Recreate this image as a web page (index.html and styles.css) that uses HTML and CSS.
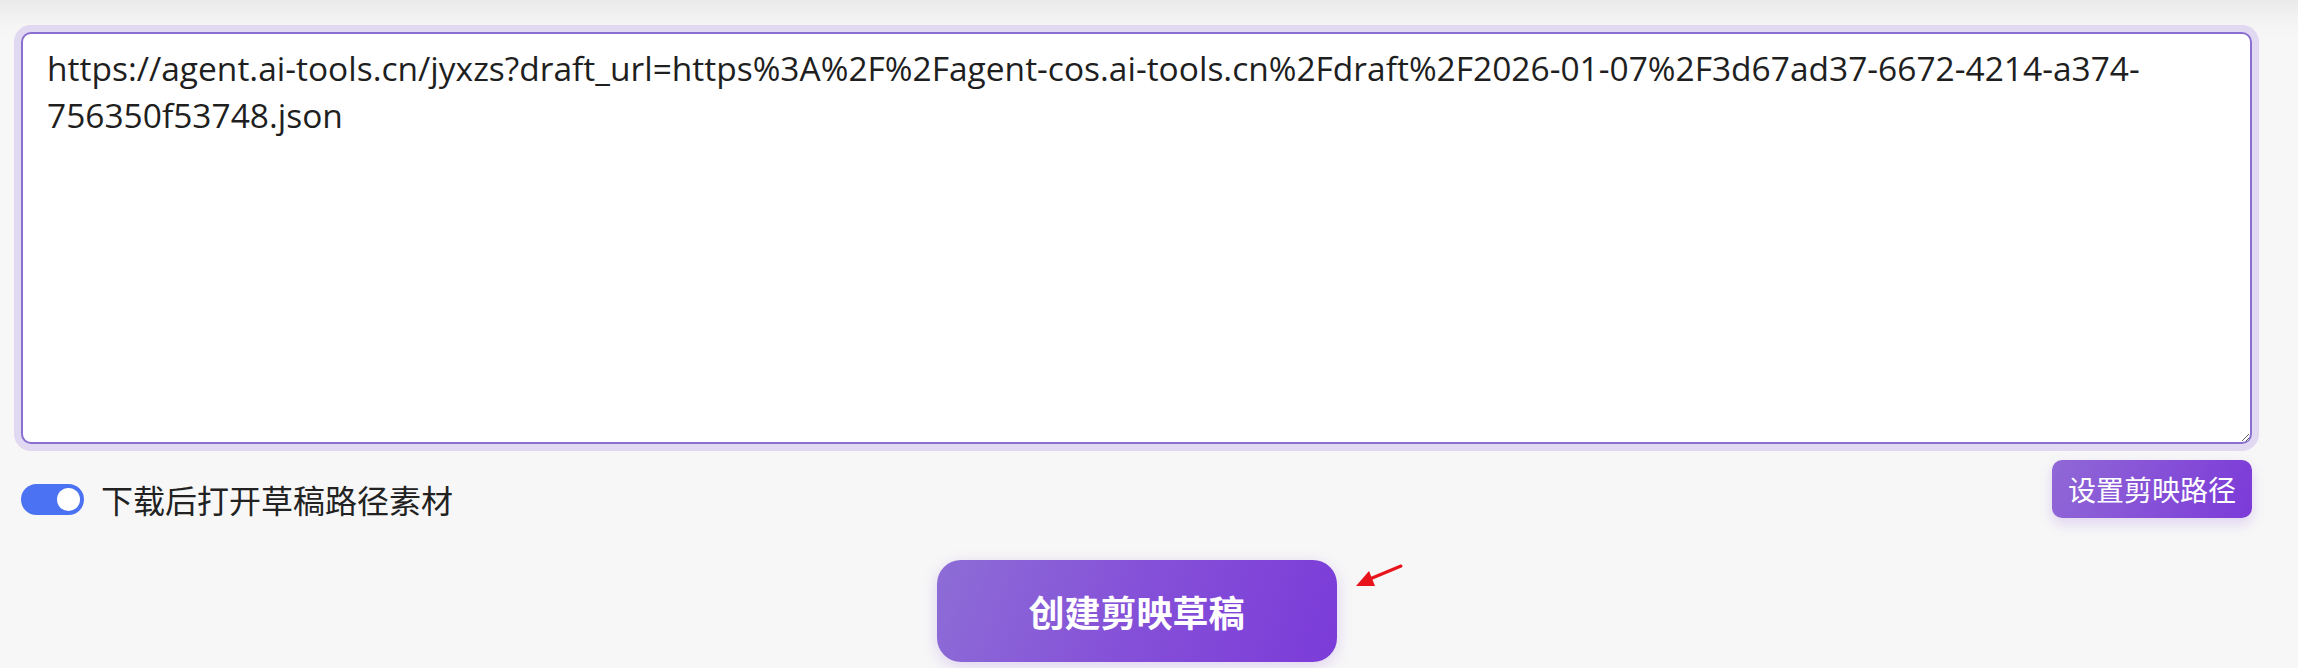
FILE: index.html
```html
<!DOCTYPE html>
<html lang="zh-CN">
<head>
<meta charset="utf-8">
<title>创建剪映草稿</title>
<link rel="stylesheet" href="styles.css">
</head>
<body>
<main class="panel">
  <textarea class="url-input" spellcheck="false">https://agent.ai-tools.cn/jyxzs?draft_url=https%3A%2F%2Fagent-cos.ai-tools.cn%2Fdraft%2F2026-01-07%2F3d67ad37-6672-4214-a374-756350f53748.json</textarea>
  <div class="options-row">
    <label class="switch-label">
      <span class="switch"><span class="knob"></span></span>
      <span class="switch-text">下载后打开草稿路径素材</span>
    </label>
    <button class="path-btn" type="button">设置剪映路径</button>
  </div>
  <div class="action-row">
    <button class="create-btn" type="button">创建剪映草稿</button>
    <svg class="pointer-arrow" width="52" height="26" viewBox="0 0 52 26" aria-hidden="true">
      <line x1="48" y1="2" x2="12" y2="17" stroke="#e8141c" stroke-width="3" stroke-linecap="round"/>
      <polygon points="3,22 16,7 22,22" fill="#e8141c"/>
    </svg>
  </div>
</main>
</body>
</html>
```

FILE: styles.css
```css
html, body {
  margin: 0;
  padding: 0;
}

body {
  background: linear-gradient(#eaeaea 0px, #f4f4f4 22px, #f7f7f7 40px, #f7f7f7 100%);
  font-family: "Open Sans", "Noto Sans CJK SC", sans-serif;
  color: #222;
  height: 668px;
  overflow: hidden;
}

.panel {
  padding: 32px 46px 0 21px;
  display: flex;
  flex-direction: column;
}

.url-input {
  display: block;
  box-sizing: border-box;
  width: 100%;
  height: 412px;
  margin: 0;
  padding: 11px 24px;
  border: 2px solid #8a6fd0;
  border-radius: 10px;
  box-shadow: 0 0 0 7px #e1d8f1;
  background: #fff;
  font-family: "Open Sans", sans-serif;
  font-size: 33.5px;
  line-height: 47px;
  color: #1f1f1f;
  outline: none;
  resize: both;
}

.options-row {
  display: flex;
  justify-content: space-between;
  align-items: flex-start;
  margin-top: 16px;
}

.switch-label {
  display: flex;
  align-items: center;
  gap: 17px;
  margin-top: 23px;
}

.switch {
  box-sizing: border-box;
  width: 63px;
  height: 31px;
  border-radius: 16px;
  background: #4a72f2;
  display: flex;
  align-items: center;
  justify-content: flex-end;
  padding-right: 4px;
}

.knob {
  width: 23px;
  height: 23px;
  border-radius: 50%;
  background: #fff;
}

.switch-text {
  font-family: "Noto Sans CJK SC", sans-serif;
  font-size: 32px;
  line-height: 32px;
  color: #222;
}

.path-btn {
  box-sizing: border-box;
  width: 200px;
  height: 58px;
  padding: 0;
  border: none;
  border-radius: 10px;
  background: linear-gradient(110deg, #9068d6 0%, #7c3ad8 100%);
  box-shadow: 0 6px 14px rgba(124, 58, 216, 0.18);
  color: #fff;
  font-family: "Noto Sans CJK SC", sans-serif;
  font-size: 28px;
  line-height: 58px;
}

.action-row {
  position: relative;
  display: flex;
  justify-content: center;
  margin-top: 42px;
}

.create-btn {
  box-sizing: border-box;
  width: 400px;
  height: 102px;
  border: none;
  border-radius: 24px;
  background: linear-gradient(110deg, #8d6dd6 0%, #8550d8 50%, #7b3bd8 100%);
  box-shadow: 0 4px 16px rgba(124, 58, 216, 0.2);
  color: #fff;
  font-family: "Noto Sans CJK SC", sans-serif;
  font-weight: 700;
  font-size: 36px;
  line-height: 102px;
  padding: 0;
}

.pointer-arrow {
  position: absolute;
  left: 1332px;
  top: 4px;
}
```
